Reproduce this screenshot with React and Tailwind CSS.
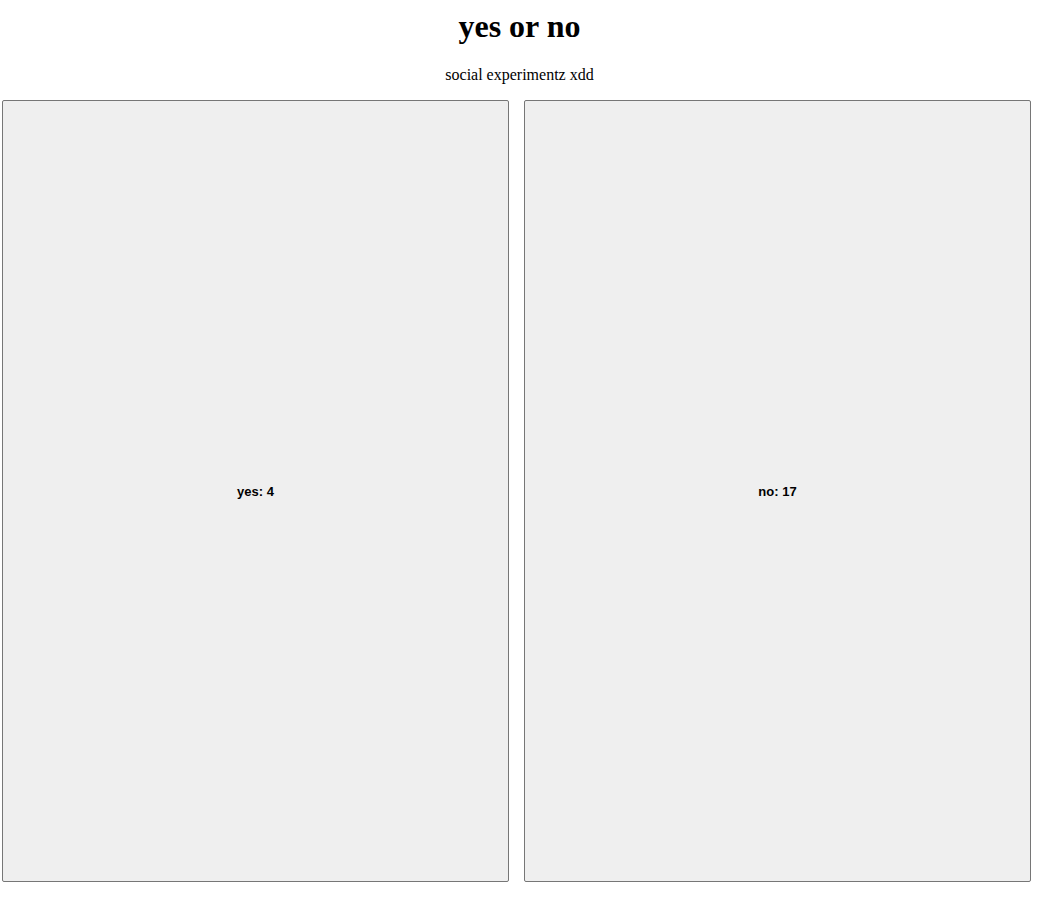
const options = [
  { label: "yes", votes: 4 },
  { label: "no", votes: 17 },
];

export default function App() {
  return (
    <main className="flex min-h-screen flex-col bg-white pr-2 pb-4 pl-0.5 text-black">
      <header className="pt-2 pl-1.5 text-center font-['Liberation_Serif',serif]">
        <h1 className="text-[32px] leading-9 font-bold">yes or no</h1>
        <p className="mt-[21px] mb-[15px] text-base leading-5">social experimentz xdd</p>
      </header>
      <div className="grid grow grid-cols-2 gap-[15px]">
        {options.map(({ label, votes }) => (
          <button
            key={label}
            type="button"
            className="rounded-[2px] border border-[#767676] bg-[#efefef] pt-0.5 font-['Liberation_Sans',sans-serif] text-[13px] leading-4 font-bold text-black"
          >
            {label}: {votes}
          </button>
        ))}
      </div>
    </main>
  );
}
